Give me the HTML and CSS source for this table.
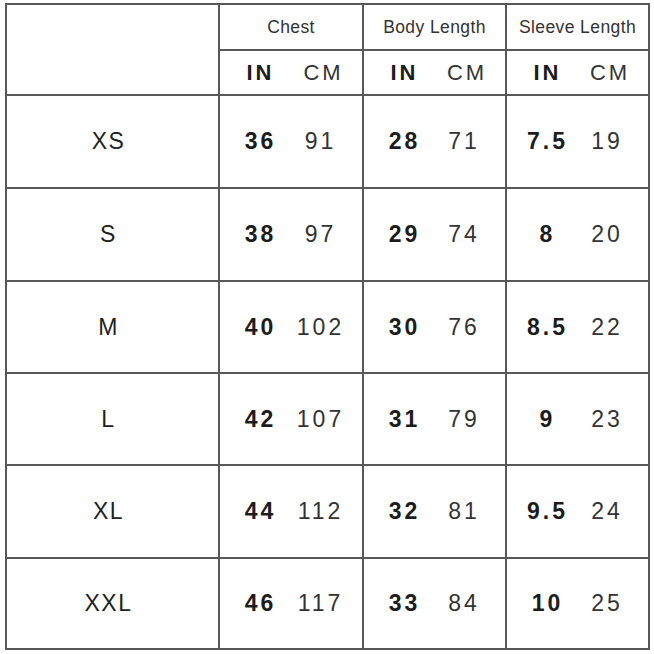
FILE: index.html
```html
<!DOCTYPE html>
<html>
<head>
<meta charset="utf-8">
<link rel="stylesheet" href="styles.css">
</head>
<body>
<table class="chart">
  <colgroup>
    <col class="c-size">
    <col class="c-a"><col class="c-b">
    <col class="c-a"><col class="c-c">
    <col class="c-a"><col class="c-c">
  </colgroup>
  <thead>
    <tr class="r-h1">
      <th class="blank" rowspan="2"></th>
      <th class="group" colspan="2">Chest</th>
      <th class="group" colspan="2">Body Length</th>
      <th class="group" colspan="2">Sleeve Length</th>
    </tr>
    <tr class="r-h2">
      <th class="unit in">IN</th><th class="unit cm">CM</th>
      <th class="unit in">IN</th><th class="unit cm">CM</th>
      <th class="unit in">IN</th><th class="unit cm">CM</th>
    </tr>
  </thead>
  <tbody>
    <tr class="r-a"><td class="size">XS</td><td class="in">36</td><td class="cm">91</td><td class="in">28</td><td class="cm">71</td><td class="in">7.5</td><td class="cm">19</td></tr>
    <tr class="r-a"><td class="size">S</td><td class="in">38</td><td class="cm">97</td><td class="in">29</td><td class="cm">74</td><td class="in">8</td><td class="cm">20</td></tr>
    <tr class="r-b"><td class="size">M</td><td class="in">40</td><td class="cm">102</td><td class="in">30</td><td class="cm">76</td><td class="in">8.5</td><td class="cm">22</td></tr>
    <tr class="r-b"><td class="size">L</td><td class="in">42</td><td class="cm">107</td><td class="in">31</td><td class="cm">79</td><td class="in">9</td><td class="cm">23</td></tr>
    <tr class="r-a"><td class="size">XL</td><td class="in">44</td><td class="cm">112</td><td class="in">32</td><td class="cm">81</td><td class="in">9.5</td><td class="cm">24</td></tr>
    <tr class="r-c"><td class="size">XXL</td><td class="in">46</td><td class="cm">117</td><td class="in">33</td><td class="cm">84</td><td class="in">10</td><td class="cm">25</td></tr>
  </tbody>
</table>
</body>
</html>
```
FILE: styles.css
```css
html, body {
  margin: 0;
  padding: 0;
  background: #ffffff;
}
body {
  padding: 3px 0 0 5px;
  font-family: "Liberation Sans", Arial, sans-serif;
  color: #222;
}
.chart {
  border-collapse: collapse;
  table-layout: fixed;
  width: 645px;
  border: 2px solid #585858;
}
.c-size { width: 213px; }
.c-a { width: 72px; }
.c-b { width: 72px; }
.c-c { width: 71px; }
.chart th, .chart td {
  border: 2px solid #585858;
  padding: 0;
  text-align: center;
  vertical-align: middle;
}
.chart .in { border-right: none; padding-left: 10px; }
.chart .cm { border-left: none; padding-right: 6px; }
.chart td.cm { padding-right: 12px; }
.r-h1 { height: 46px; }
.r-h2 { height: 45px; }
.r-a { height: 93px; }
.r-b { height: 92px; }
.r-c { height: 91px; }
.group {
  font-size: 17.5px;
  font-weight: normal;
  color: #333;
  letter-spacing: 0.4px;
}
.unit {
  font-size: 22px;
  letter-spacing: 3px;
  color: #1c1c1c;
}
.unit.in { font-weight: bold; }
.unit.cm { font-weight: normal; color: #333; }
.size {
  font-size: 23px;
  letter-spacing: 1.5px;
  color: #222;
  padding-right: 8px !important;
}
td.in {
  font-size: 23px;
  font-weight: bold;
  letter-spacing: 3px;
  color: #1c1c1c;
}
td.cm {
  font-size: 23px;
  letter-spacing: 3px;
  color: #333;
}
```
